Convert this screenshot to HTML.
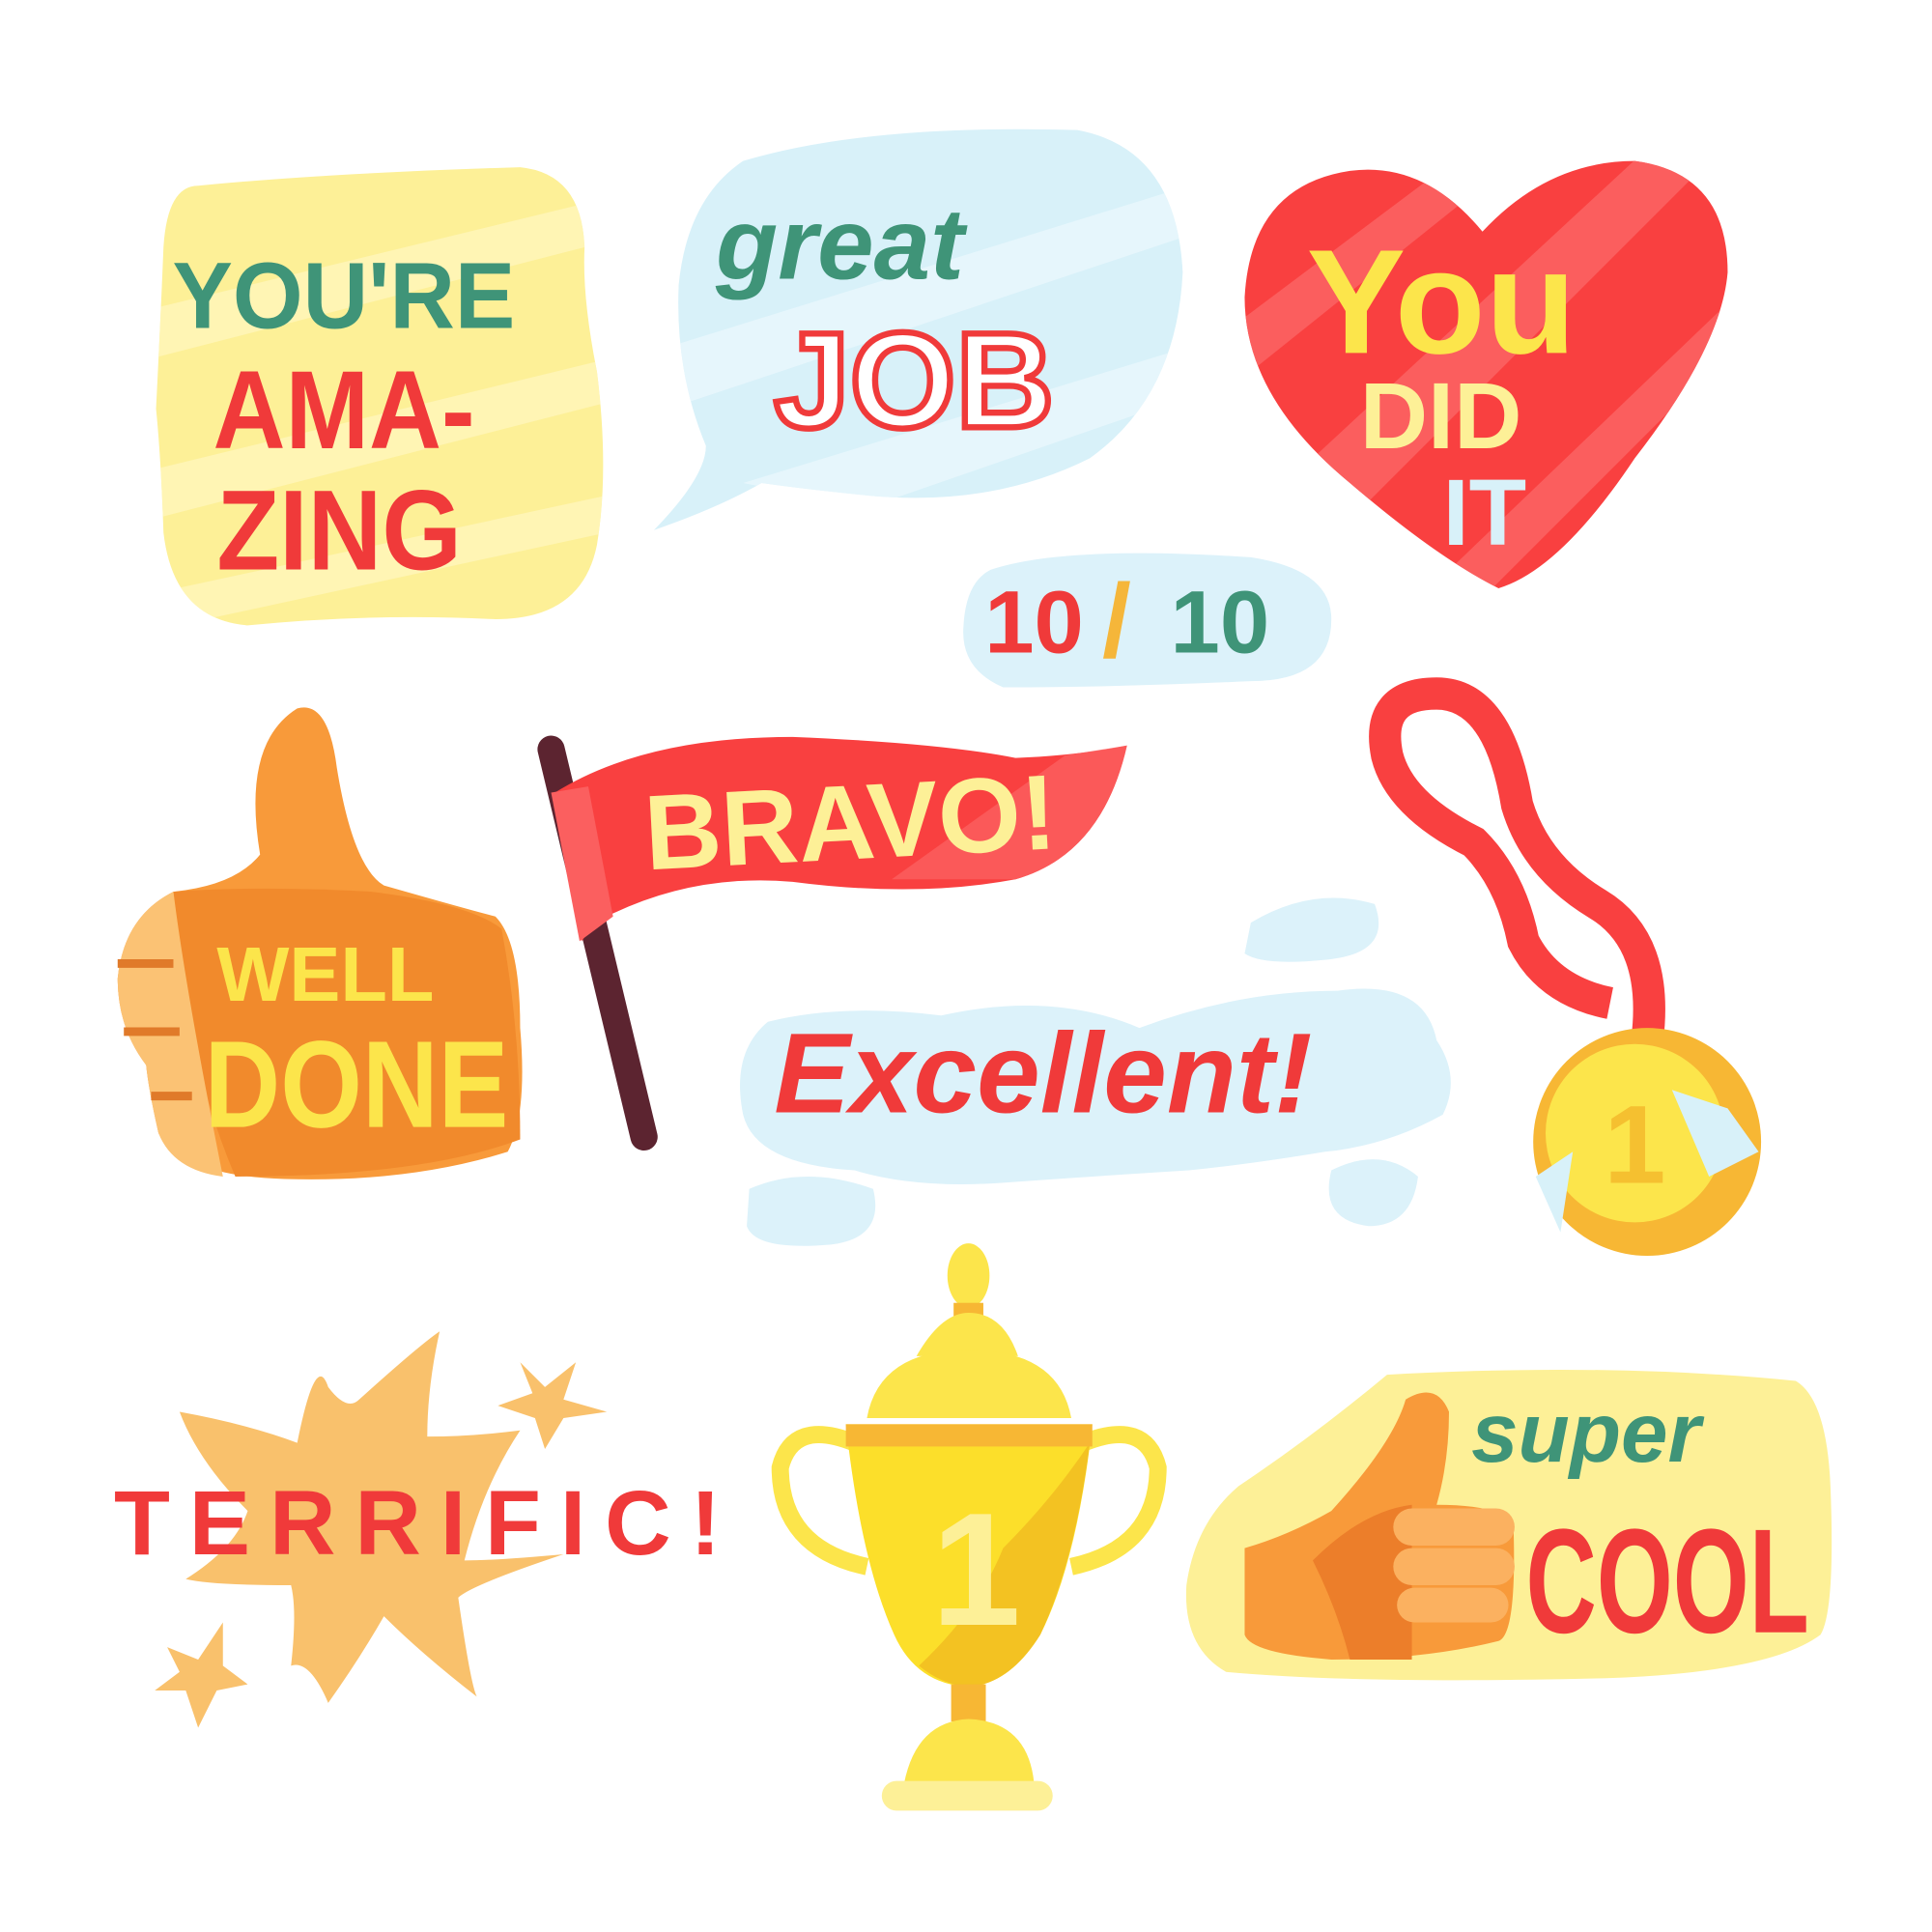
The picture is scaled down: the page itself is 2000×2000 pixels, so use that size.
<!DOCTYPE html>
<html><head><style>
html,body{margin:0;padding:0;background:#fff;width:2000px;height:2000px;overflow:hidden}
svg{display:block}
text{font-family:"Liberation Sans",sans-serif;font-weight:bold}
</style></head><body>
<svg width="2000" height="2000" viewBox="0 0 1560 1560" xmlns="http://www.w3.org/2000/svg">
<defs>
<clipPath id="c1"><path d="M160 150 Q260 140 420 135 Q470 140 472 200 Q470 240 482 300 Q492 380 482 440 Q470 500 400 500 Q300 495 200 505 Q140 500 132 430 Q130 370 126 330 Q130 250 132 200 Q135 150 160 150Z"/></clipPath>
<clipPath id="c2"><path d="M600 130 Q700 100 870 105 Q950 120 955 220 Q950 320 880 370 Q800 410 700 400 Q650 395 615 390 Q580 410 528 428 Q570 385 570 360 Q545 300 548 230 Q555 160 600 130Z"/></clipPath>
<clipPath id="c3"><path d="M1197 187 Q1150 130 1090 138 Q1010 150 1005 240 Q1005 320 1090 390 Q1160 450 1210 475 Q1260 460 1320 370 Q1390 280 1395 220 Q1395 140 1320 130 Q1250 130 1197 187Z"/></clipPath>
</defs>
<rect width="1560" height="1560" fill="#fff"/>
<!-- You're amazing -->
<path d="M160 150 Q260 140 420 135 Q470 140 472 200 Q470 240 482 300 Q492 380 482 440 Q470 500 400 500 Q300 495 200 505 Q140 500 132 430 Q130 370 126 330 Q130 250 132 200 Q135 150 160 150Z" fill="#fdf097"/>
<g clip-path="url(#c1)" fill="#fff7c0" opacity=".7"><path d="M120 250 L490 160 L490 195 L120 290Z M120 380 L490 290 L490 325 L120 420Z M120 480 L490 400 L490 430 L120 510Z"/></g>
<text x="145" y="265" font-size="76" fill="#3f9478" transform="scale(0.96 1)">YOU'RE</text>
<text x="172" y="362" font-size="90" fill="#f03a3a" font-weight="normal" transform="translate(172 0) scale(0.9 1) translate(-172 0)">AMA-</text>
<text x="175" y="460" font-size="92" fill="#f03a3a" font-weight="normal" transform="translate(175 0) scale(0.9 1) translate(-175 0)">ZING</text>
<!-- great job bubble -->
<path d="M600 130 Q700 100 870 105 Q950 120 955 220 Q950 320 880 370 Q800 410 700 400 Q650 395 615 390 Q580 410 528 428 Q570 385 570 360 Q545 300 548 230 Q555 160 600 130Z" fill="#d8f1f9"/>
<g clip-path="url(#c2)" fill="#eaf8fc" opacity=".8"><path d="M540 280 L960 150 L960 190 L540 330Z M600 390 L960 280 L960 320 L700 410Z"/></g>
<text x="578" y="225" font-size="82" fill="#3f9478" font-style="italic" font-family="Liberation Serif" font-weight="normal">great</text>
<text x="625" y="345" font-size="110" fill="#fff" stroke="#f03a3a" stroke-width="5" font-weight="normal">JOB</text>
<!-- heart -->
<path d="M1197 187 Q1150 130 1090 138 Q1010 150 1005 240 Q1005 320 1090 390 Q1160 450 1210 475 Q1260 460 1320 370 Q1390 280 1395 220 Q1395 140 1320 130 Q1250 130 1197 187Z" fill="#f94040"/>
<g clip-path="url(#c3)" fill="#fb6464" opacity=".85"><path d="M1000 260 L1160 140 L1185 160 L1010 300Z M1060 370 L1330 120 L1370 140 L1100 410Z M1160 470 L1400 240 L1400 280 L1200 480Z"/></g>
<text x="1055" y="285" font-size="120" fill="#fce54b" font-weight="normal">You</text>
<text x="1098" y="362" font-size="76" fill="#fdf097">DID</text>
<text x="1165" y="440" font-size="76" fill="#d8f1f9">IT</text>
<!-- 10/10 -->
<path d="M800 460 Q860 440 1010 450 Q1075 460 1075 500 Q1075 550 1010 550 Q900 555 810 555 Q775 540 778 505 Q780 470 800 460Z" fill="#dcf2fa"/>
<text x="795" y="527" font-size="72" fill="#f03a3a" font-weight="normal">10</text>
<text x="890" y="530" font-size="84" fill="#f5b63a" font-weight="normal">/</text>
<text x="945" y="527" font-size="72" fill="#3f9478" font-weight="normal">10</text>
<!-- thumbs up well done -->
<path d="M210 690 Q195 600 240 572 Q265 565 272 620 Q285 700 310 715 Q380 735 400 740 Q420 760 420 830 Q426 900 410 930 Q330 955 230 952 Q150 950 128 915 Q120 880 118 860 Q95 830 95 790 Q100 740 140 720 Q190 715 210 690Z" fill="#f89a3a"/>
<path d="M140 720 Q210 715 300 720 Q380 730 405 750 Q420 830 420 920 Q340 950 190 950 Q160 880 150 800Z" fill="#f18a2c"/>
<path d="M95 790 Q100 740 140 720 Q150 800 180 950 Q140 945 128 915 Q120 880 118 860 Q95 830 95 790Z" fill="#fbc274"/>
<path d="M95 778 H140 M100 833 H145 M122 885 H155" stroke="#e07a2a" stroke-width="7"/>
<text x="175" y="808" font-size="62" fill="#fce54b" font-weight="normal">WELL</text>
<text x="165" y="910" font-size="100" fill="#fce54b" font-weight="normal" transform="translate(165 0) scale(0.85 1) translate(-165 0)">DONE</text>
<!-- flag -->
<path d="M445 605 L520 918" stroke="#5c2430" stroke-width="22" stroke-linecap="round"/>
<path d="M448 640 Q520 595 640 595 Q760 600 820 612 Q870 610 910 602 Q890 690 820 710 Q740 725 640 712 Q560 705 490 740 Q475 750 470 760Z" fill="#f94040"/>
<path d="M445 640 L475 635 L495 740 L468 760Z" fill="#fb5f5f"/>
<path d="M720 710 L860 610 L910 602 Q890 690 820 710Z" fill="#fb5f5f" opacity=".8"/>
<text x="520" y="695" font-size="86" fill="#fdf097" font-weight="normal" transform="rotate(-3 660 660)">BRAVO!</text>
<!-- excellent cloud -->
<path d="M620 825 Q680 810 760 820 Q850 800 920 830 Q1000 800 1080 800 Q1150 790 1160 840 Q1180 870 1165 900 Q1120 925 1070 930 Q1010 940 960 945 Q880 950 810 955 Q740 960 690 945 Q610 940 600 900 Q590 850 620 825Z" fill="#dcf2fa"/>
<path d="M1010 745 Q1060 715 1110 730 Q1125 770 1070 775 Q1020 780 1005 770Z" fill="#dcf2fa"/>
<path d="M605 960 Q650 940 705 960 Q715 1000 670 1005 Q610 1010 603 990Z" fill="#dcf2fa"/>
<path d="M1075 945 Q1115 925 1145 950 Q1140 990 1105 990 Q1065 985 1075 945Z" fill="#dcf2fa"/>
<text x="625" y="898" font-size="92" fill="#f03a3a" font-style="italic" font-family="Liberation Serif" font-weight="normal">Excellent!</text>
<!-- medal -->
<path d="M1330 840 Q1340 760 1290 730 Q1240 700 1225 650 Q1210 560 1160 560 Q1110 560 1120 610 Q1130 650 1190 680 Q1220 710 1230 760 Q1250 800 1300 810" fill="none" stroke="#f94040" stroke-width="26"/>
<circle cx="1330" cy="922" r="92" fill="#f7b734"/>
<circle cx="1320" cy="915" r="72" fill="#fce54b"/>
<text x="1295" y="955" font-size="90" fill="#f5c030" font-family="Liberation Serif">1</text>
<path d="M1240 950 L1270 930 L1260 995Z M1350 880 L1395 895 L1420 930 L1380 950Z" fill="#d8f1f9"/>
<!-- terrific star -->
<path d="M240 1165 Q255 1090 265 1120 Q280 1140 290 1130 Q340 1085 355 1075 Q345 1120 345 1160 Q380 1160 420 1155 Q390 1200 375 1260 Q400 1260 455 1255 Q380 1280 370 1290 Q380 1360 385 1370 Q340 1335 310 1305 Q290 1340 265 1375 Q250 1340 235 1345 Q240 1300 235 1280 Q170 1280 150 1275 Q190 1250 200 1220 Q160 1180 145 1140 Q200 1150 240 1165Z" fill="#f9c16c"/>
<path d="M420 1100 L440 1120 L465 1100 L455 1130 L490 1140 L455 1145 L440 1170 L432 1145 L402 1135 L430 1125Z M135 1330 L160 1340 L180 1310 L180 1345 L200 1360 L175 1365 L160 1395 L150 1365 L125 1365 L145 1350Z" fill="#f9c16c"/>
<text x="92" y="1255" font-size="74" fill="#f03a3a" textLength="490" lengthAdjust="spacing">TERRIFIC!</text>
<!-- trophy -->
<ellipse cx="782" cy="1030" rx="17" ry="26" fill="#fce54b"/>
<rect x="770" y="1052" width="24" height="14" fill="#f7b734"/>
<path d="M740 1095 Q760 1060 782 1060 Q810 1060 822 1095Z" fill="#fce54b"/>
<path d="M700 1145 Q710 1090 782 1090 Q855 1090 865 1145Z" fill="#fce54b"/>
<path d="M690 1165 Q640 1145 630 1185 Q630 1250 700 1265" fill="none" stroke="#fce54b" stroke-width="14"/>
<path d="M875 1165 Q925 1145 935 1185 Q935 1250 865 1265" fill="none" stroke="#fce54b" stroke-width="14"/>
<path d="M683 1150 H882 Q870 1260 840 1320 Q815 1360 782 1362 Q740 1360 722 1320 Q695 1260 683 1150Z" fill="#fcdf2a"/>
<path d="M810 1250 Q850 1210 880 1165 Q868 1260 840 1320 Q815 1360 782 1362 Q760 1360 742 1345 Q790 1300 810 1250Z" fill="#f3c222"/>
<rect x="683" y="1150" width="199" height="18" fill="#f7b734"/>
<text x="752" y="1312" font-size="130" fill="#fdf097" font-family="Liberation Serif">1</text>
<rect x="768" y="1360" width="28" height="30" fill="#f7b734"/>
<path d="M730 1440 Q740 1390 782 1388 Q830 1390 835 1440Z" fill="#fce54b"/>
<rect x="712" y="1438" width="138" height="24" rx="12" fill="#fdf097"/>
<!-- super cool -->
<path d="M1000 1200 Q1060 1160 1120 1110 Q1300 1100 1450 1115 Q1475 1130 1478 1200 Q1482 1300 1470 1320 Q1430 1350 1300 1355 Q1100 1360 990 1350 Q955 1330 958 1280 Q965 1230 1000 1200Z" fill="#fdf097"/>
<path d="M1005 1250 Q1040 1240 1075 1220 Q1125 1165 1135 1130 Q1160 1115 1170 1140 Q1170 1180 1160 1215 Q1210 1215 1222 1230 Q1225 1320 1210 1325 Q1150 1340 1075 1340 Q1010 1335 1005 1320Z" fill="#f89a3a"/>
<path d="M1060 1260 Q1080 1300 1090 1340 H1140 V1215 Q1100 1220 1060 1260Z" fill="#ec7e2a"/>
<rect x="1125" y="1218" width="98" height="30" rx="15" fill="#fbb160"/>
<rect x="1125" y="1250" width="98" height="30" rx="15" fill="#fbb160"/>
<rect x="1128" y="1282" width="90" height="28" rx="14" fill="#fbb160"/>
<text x="1188" y="1180" font-size="68" fill="#3f9478" font-style="italic" font-family="Liberation Serif" font-weight="normal">super</text>
<text x="1232" y="1318" font-size="120" fill="#f03a3a" font-weight="normal" transform="translate(1232 0) scale(0.66 1) translate(-1232 0)">COOL</text>
</svg>
</body></html>
